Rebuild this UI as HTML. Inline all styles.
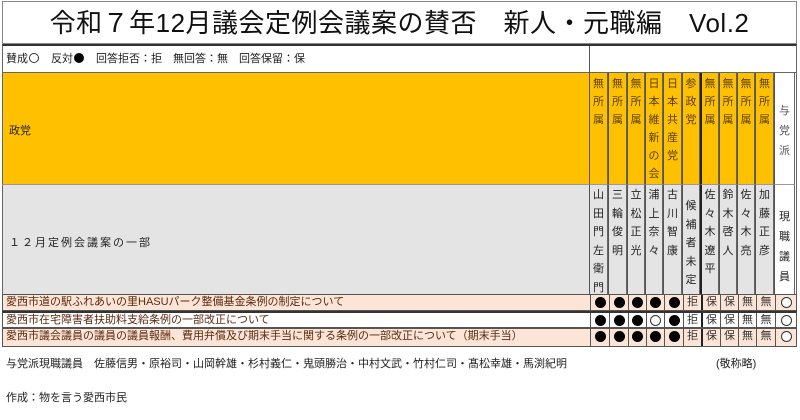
<!DOCTYPE html>
<html><head><meta charset="utf-8"><style>
*{margin:0;padding:0;box-sizing:border-box}
body{width:800px;height:420px;background:#fff;font-family:"Liberation Sans","Noto Sans CJK JP",sans-serif;position:relative;overflow:hidden;color:#222}
.a{position:absolute}
.t{left:2px;top:1px;width:795px;height:43px;border:1px solid #888;font-size:26px;text-align:center;line-height:42px;color:#111;letter-spacing:0.5px}
.lg{left:2px;top:44px;width:795px;height:29px;border:1px solid #666;border-top:2px solid #333;font-size:11px;line-height:26px;padding-left:3px}
.hd{left:2px;top:73px;width:587px;height:111px;background:#ffc000;border-left:1px solid #666;font-size:11px;padding:49px 0 0 6px}
.gr{left:2px;top:184px;width:587px;height:110px;background:#e4e4e4;border-left:1px solid #666;border-top:1px solid #999;font-size:11px;padding:49px 0 0 6px;letter-spacing:2px}
.col{position:absolute;border-right:1px solid #666;font-size:11px;text-align:center;line-height:18px}
.row{position:absolute;left:2px;width:795px;height:17px;border:1px solid #555;font-size:11px;line-height:15px;padding-left:3px;color:#5a2a10}
.c{position:absolute;top:0;height:100%;border-left:1px solid #555;text-align:center;font-size:11px;color:#333}
.dot{display:inline-block;width:11px;height:11px;border-radius:50%;background:#000;margin-top:2px}
.o{display:inline-block;width:11px;height:11px;border-radius:50%;border:1px solid #333;background:#fff;margin-top:2px}
.ls{display:inline-block;width:10px;height:10px;border-radius:50%;vertical-align:-1px;margin:0 1px}
</style></head><body>
<div class="a t">令和７年12月議会定例会議案の賛否　新人・元職編　Vol.2</div>
<div class="a lg">賛成<span class="ls" style="border:1px solid #333"></span>　反対<span class="ls" style="background:#000"></span>　回答拒否：拒　無回答：無　回答保留：保</div>
<div class="a" style="left:589px;top:46px;width:1px;height:27px;background:#555"></div>
<div class="a hd">政党</div>
<div class="a gr">１２月定例会議案の一部</div>
<div class="a" style="left:589px;top:73px;width:208px;height:221px;border-left:1px solid #555;border-right:1px solid #666"></div>
<div id="cols"></div>
<div class="a" style="left:2px;top:294px;width:795px;height:1px;background:#555"></div>
<div class="row" style="top:294px;background:#fce4d6">愛西市道の駅ふれあいの里HASUパーク整備基金条例の制定について</div>
<div class="row" style="top:311px;background:#fff;border-top:2px solid #333">愛西市在宅障害者扶助料支給条例の一部改正について</div>
<div class="row" style="top:328px;background:#fce4d6;height:19px">愛西市議会議員の議員の議員報酬、費用弁償及び期末手当に関する条例の一部改正について（期末手当）</div>
<div class="a" style="left:6px;top:355px;font-size:11px">与党派現職議員　佐藤信男・原裕司・山岡幹雄・杉村義仁・鬼頭勝治・中村文武・竹村仁司・髙松幸雄・馬渕紀明</div>
<div class="a" style="left:716px;top:355px;font-size:11px">(敬称略)</div>
<div class="a" style="left:6px;top:389px;font-size:11px">作成：物を言う愛西市民</div>
<script>
var xs=[589,608,627,645,663,682,700,719,737,755,774,795];
var hdr=["無所属","無所属","無所属","日本維新の会","日本共産党","参政党","無所属","無所属","無所属","無所属"];
var nm=["山田門左衛門","三輪俊明","立松正光","浦上奈々","古川智康","候補者未定","佐々木遼平","鈴木啓人","佐々木亮","加藤正彦"];
var v=[["●","●","●","●","●","拒","保","保","無","無","○"],["●","●","●","○","●","拒","保","保","無","無","○"],["●","●","●","●","●","拒","保","保","無","無","○"]];
var h="";
for(var i=0;i<11;i++){var l=xs[i],w=xs[i+1]-l;
 var bl=(i==6)?"2px solid #222":"1px solid #555";
 if(i<10){
  h+='<div class="col" style="left:'+l+'px;top:73px;width:'+w+'px;height:111px;background:#ffc000;border-left:'+bl+';padding-top:2px;color:#5a4000">'+hdr[i].split("").join("<br>")+'</div>';
  var pt=(i==5)?12:1;
  h+='<div class="col" style="left:'+l+'px;top:184px;width:'+w+'px;height:110px;background:#e4e4e4;border-left:'+bl+';border-top:1px solid #999;padding-top:'+pt+'px;line-height:18.5px;overflow:hidden">'+nm[i].split("").join("<br>")+'</div>';
 } else {
  h+='<div class="col" style="left:'+l+'px;top:73px;width:'+w+'px;height:111px;background:#fff;border-left:'+bl+';padding-top:28px;line-height:20px;color:#555">与<br>党<br>派</div>';
  h+='<div class="col" style="left:'+l+'px;top:184px;width:'+w+'px;height:110px;background:#fff;border-left:'+bl+';border-top:1px solid #999;padding-top:22px;line-height:20px">現<br>職<br>議<br>員</div>';
 }
}
document.getElementById("cols").innerHTML=h;
var rows=document.querySelectorAll(".row");
for(var r=0;r<3;r++){var s="";
 for(var i=0;i<11;i++){var l=xs[i]-2,w=xs[i+1]-xs[i];var c=v[r][i];
  var bl=(i==6)?"border-left:2px solid #222;":"";
  var inner=c=="●"?'<span class="dot"></span>':c=="○"?'<span class="o"></span>':c;
  s+='<div class="c" style="left:'+l+'px;width:'+w+'px;'+bl+'">'+inner+'</div>';}
 rows[r].innerHTML+=s;}
</script>
</body></html>
